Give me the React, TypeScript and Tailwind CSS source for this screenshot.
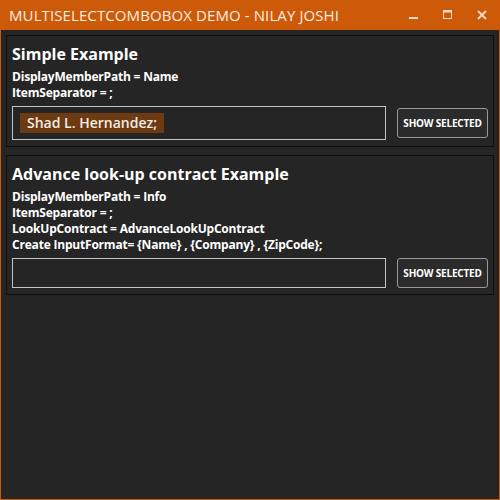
import React from 'react';

const font = { fontFamily: '"Open Sans", "Noto Sans", sans-serif' };

interface PanelProps {
  title: string;
  lines: string[];
  tag?: string;
}

const Panel: React.FC<PanelProps> = ({ title, lines, tag }) => (
  <div className="border border-[#0e0e0e] px-[5px] pt-[7px] pb-[6px]">
    <h2 className="text-[16px] font-bold leading-[22px] text-white">{title}</h2>
    <div className="mt-[4px] text-[12px] font-bold leading-[16px] tracking-[-0.2px] text-white">
      {lines.map((l, i) => (
        <p key={i}>{l}</p>
      ))}
    </div>
    <div className="mt-[5px] flex items-center gap-[11px]">
      <div
        className={
          tag
            ? 'flex h-[34px] w-[374px] items-center border border-[#c4c4c4] px-[7px]'
            : 'flex h-[30px] w-[374px] items-center border border-[#c4c4c4] px-[7px]'
        }
      >
        {tag && (
          <span className="bg-[#6e3a12] px-[7px] text-[14px] font-semibold leading-[20px] text-[#f2ede8]">
            {tag}
          </span>
        )}
      </div>
      <button className="h-[30px] w-[91px] rounded-[3px] border border-[#9a9a9a] bg-[#2b2b2b] text-[10px] font-bold tracking-[-0.2px] text-white">
        SHOW SELECTED
      </button>
    </div>
  </div>
);

export default function App() {
  return (
    <div
      className="flex h-[500px] w-[500px] flex-col border-x border-b border-[#cc5a09] bg-[#252525]"
      style={font}
    >
      <div className="flex h-[30px] shrink-0 items-center bg-[#cc5a09] pl-[8px]">
        <span className="text-[15px] leading-none tracking-[0.1px] text-[#fbeee4]">
          MULTISELECTCOMBOBOX DEMO - NILAY JOSHI
        </span>
        <div className="ml-auto flex items-center gap-[24px] pr-[12px]">
          <svg width="10" height="10" viewBox="0 0 10 10">
            <rect x="0" y="7" width="9" height="2" fill="#f6dccb" />
          </svg>
          <svg width="10" height="10" viewBox="0 0 10 10">
            <rect x="0.5" y="0.5" width="8" height="8" fill="none" stroke="#f6dccb" />
            <rect x="0.5" y="0.5" width="8" height="2" fill="#f6dccb" />
          </svg>
          <svg width="10" height="10" viewBox="0 0 10 10">
            <path d="M1 1 L9 9 M9 1 L1 9" stroke="#f6dccb" strokeWidth="1.8" />
          </svg>
        </div>
      </div>
      <div className="flex flex-col gap-[8px] px-[5px] pt-[5px]">
        <Panel
          title="Simple Example"
          lines={['DisplayMemberPath = Name', 'ItemSeparator = ;']}
          tag="Shad L. Hernandez;"
        />
        <Panel
          title="Advance look-up contract Example"
          lines={[
            'DisplayMemberPath = Info',
            'ItemSeparator = ;',
            'LookUpContract = AdvanceLookUpContract',
            'Create InputFormat= {Name} , {Company} , {ZipCode};',
          ]}
        />
      </div>
    </div>
  );
}
